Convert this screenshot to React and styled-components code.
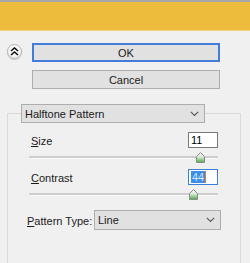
import React from 'react'
import styled, { createGlobalStyle } from 'styled-components'

const GlobalStyle = createGlobalStyle`
  html, body {
    margin: 0;
    padding: 0;
    background: #f0f0f0;
  }
  body {
    font-family: 'Liberation Sans', Arial, sans-serif;
    font-size: 11px;
    color: #000;
  }
`

const sliders = [
  { id: 'size', label: 'Size', key: 'S', value: '11', pos: 0.907 },
  { id: 'contrast', label: 'Contrast', key: 'C', value: '44', pos: 0.87, focused: true },
]

function Chevron() {
  return (
    <svg width="9" height="6" viewBox="0 0 9 6">
      <path d="M0.8 0.8 L4.5 4.5 L8.2 0.8" fill="none" stroke="#5a5a5a" strokeWidth="1.2" />
    </svg>
  )
}

function Thumb() {
  return (
    <svg width="9" height="11" viewBox="0 0 9 11">
      <defs>
        <linearGradient id="tg" x1="0" y1="0" x2="0" y2="1">
          <stop offset="0" stopColor="#f4f4f4" />
          <stop offset="0.45" stopColor="#d9e9d6" />
          <stop offset="1" stopColor="#4fa845" />
        </linearGradient>
      </defs>
      <path d="M4.5 0.5 L8.5 4.5 L8.5 10.5 L0.5 10.5 L0.5 4.5 Z" fill="url(#tg)" stroke="#8c8c8c" />
    </svg>
  )
}

function Label({ text, mnemonic }) {
  const i = text.indexOf(mnemonic)
  return (
    <LabelText>
      {text.slice(0, i)}
      <Key>{mnemonic}</Key>
      {text.slice(i + 1)}
    </LabelText>
  )
}

export default function App() {
  return (
    <Page>
      <GlobalStyle />
      <TitleBar />
      <ActionRow>
        <ExpandButton>
          <svg width="9" height="9" viewBox="0 0 9 9">
            <path d="M1 4 L4.5 1 L8 4 M1 8 L4.5 5 L8 8" fill="none" stroke="#111" strokeWidth="1.6" />
          </svg>
        </ExpandButton>
        <ButtonColumn>
          <DialogButton $primary>OK</DialogButton>
          <DialogButton>Cancel</DialogButton>
        </ButtonColumn>
      </ActionRow>

      <Group>
        <Legend>
          <Select $width="184px" $height="19px">
            <span>Halftone Pattern</span>
            <Chevron />
          </Select>
        </Legend>
        <GroupBody>
          {sliders.map((s) => (
            <React.Fragment key={s.id}>
              <FieldRow>
                <Label text={s.label} mnemonic={s.key} />
                <NumberBox $focused={s.focused}>
                  {s.focused ? (
                    <>
                      <Selected>{s.value}</Selected>
                      <Caret />
                    </>
                  ) : (
                    s.value
                  )}
                </NumberBox>
              </FieldRow>
              <Slider>
                <Track />
                <ThumbHolder style={{ left: `${s.pos * 100}%` }}>
                  <Thumb />
                </ThumbHolder>
              </Slider>
            </React.Fragment>
          ))}
          <TypeRow>
            <Label text="Pattern Type:" mnemonic="P" />
            <Select $width="127px" $height="20px">
              <span>Line</span>
              <Chevron />
            </Select>
          </TypeRow>
        </GroupBody>
      </Group>
    </Page>
  )
}

const Page = styled.div`
  width: 250px;
  height: 263px;
  overflow: hidden;
  background: #f0f0f0;
`

const TitleBar = styled.div`
  height: 28px;
  border-top: 2px solid #a6a6a6;
  background: #eebc3c;
  border-bottom: 1px solid #f3d37f;
`

const ActionRow = styled.div`
  display: flex;
  align-items: flex-start;
  gap: 10px;
  padding: 12px 0 0 7px;
`

const ExpandButton = styled.div`
  width: 13px;
  height: 13px;
  margin-top: 1px;
  border-radius: 50%;
  border: 1px solid #b4b4b4;
  background: radial-gradient(circle at 50% 35%, #ffffff 0%, #f4f4f4 60%, #dedede 100%);
  box-shadow: 0 1px 1px rgba(0, 0, 0, 0.18);
  display: flex;
  align-items: center;
  justify-content: center;
`

const ButtonColumn = styled.div`
  display: flex;
  flex-direction: column;
  gap: 8px;
`

const DialogButton = styled.div`
  box-sizing: border-box;
  width: 188px;
  height: 19px;
  display: flex;
  align-items: center;
  justify-content: center;
  background: #e1e1e1;
  border: ${(p) => (p.$primary ? '2px solid #447cd9' : '1px solid #adadad')};
  color: #1a1a1a;
`

const Group = styled.fieldset`
  box-sizing: border-box;
  margin: 15px 0 0 7px;
  padding: 0;
  width: 234px;
  height: 320px;
  border: 1px solid #dadada;
`

const Legend = styled.legend`
  margin-left: 13px;
  padding: 0;
`

const Select = styled.div`
  box-sizing: border-box;
  width: ${(p) => p.$width};
  height: ${(p) => p.$height};
  display: flex;
  align-items: center;
  justify-content: space-between;
  padding: 0 5px 0 3px;
  background: #e1e1e1;
  border: 1px solid #adadad;
  color: #1a1a1a;
`

const GroupBody = styled.div`
  padding: 9px 22px 0 20px;
  display: flex;
  flex-direction: column;
`

const FieldRow = styled.div`
  display: flex;
  align-items: center;
  justify-content: space-between;
  padding-left: 3px;
  height: 16px;
`

const LabelText = styled.span`
  white-space: nowrap;
  padding-top: 2px;
  color: #1a1a1a;
`

const Key = styled.span`
  text-decoration: underline;
`

const NumberBox = styled.div`
  box-sizing: border-box;
  width: 30px;
  height: 16px;
  display: flex;
  align-items: center;
  padding-left: 2px;
  background: #fff;
  border: 1px solid ${(p) => (p.$focused ? '#3d7fdc' : '#7a7a7a')};
`

const Selected = styled.span`
  background: #3d8ee8;
  color: #d4e6fb;
  padding: 0 1px;
  line-height: 12px;
`

const Caret = styled.span`
  width: 1px;
  height: 12px;
  background: #e07a1c;
`

const Slider = styled.div`
  position: relative;
  height: 14px;
  margin: 2px 0 5px 1px;
`

const Track = styled.div`
  position: absolute;
  left: 0;
  right: 0;
  top: 6px;
  height: 2px;
  background: #cdcdcd;
  border-bottom: 1px solid #fafafa;
  border-radius: 1px;
`

const ThumbHolder = styled.div`
  position: absolute;
  top: 2px;
  width: 9px;
  height: 11px;
  margin-left: -4px;
  line-height: 0;
`

const TypeRow = styled.div`
  display: flex;
  align-items: center;
  justify-content: space-between;
  margin: 4px -3px 0 -1px;
`
